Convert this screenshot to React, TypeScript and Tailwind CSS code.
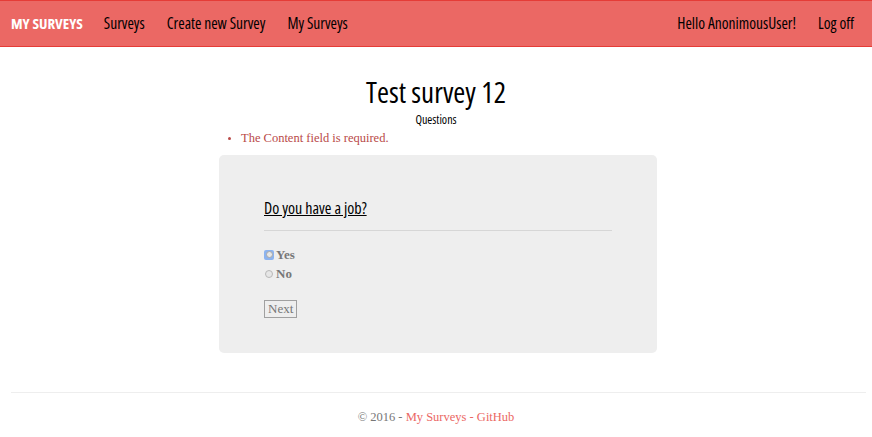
import React from "react";

const head = { fontFamily: '"Open Sans", "Roboto", sans-serif', fontStretch: "condensed" as const };
const serif = { fontFamily: '"Liberation Serif", Georgia, serif' };

export default function App() {
  return (
    <div className="w-[872px] h-[437px] bg-white overflow-hidden">
      <nav className="h-[47px] bg-[#eb6864] border-y border-[#e53c37] flex items-center justify-between text-[15.5px] text-black" style={head}>
        <div className="flex items-center">
          <span className="pl-[11px] pr-[21px] text-white font-bold text-[15px]">MY SURVEYS</span>
          <span className="pr-[22px]">Surveys</span>
          <span className="pr-[22px]">Create new Survey</span>
          <span>My Surveys</span>
        </div>
        <div className="flex items-center pr-[18px]">
          <span className="pr-[22px]">Hello AnonimousUser!</span>
          <span>Log off</span>
        </div>
      </nav>
      <div className="flex flex-col items-center pt-[29px]" style={head}>
        <h1 className="text-[29px] leading-[32px] text-black">Test survey 12</h1>
        <div className="text-[12px] leading-[16px] mt-[4px] text-black">Questions</div>
      </div>
      <div className="ml-[219px] w-[438px]">
        <ul className="list-disc pl-[22px] mt-[2px] text-[12.5px] leading-[17px] text-[#b94a48] marker:text-[10px]" style={serif}>
          <li>The Content field is required.</li>
        </ul>
        <div className="mt-[8px] h-[198px] bg-[#eeeeee] rounded-[5px] pl-[45px] pr-[45px] pt-[44px]">
          <div className="text-[16px] leading-[18px] underline text-black" style={head}>Do you have a job?</div>
          <div className="mt-[13px] h-px bg-[#d6d6d6]" />
          <div className="mt-[17px] flex flex-col gap-[6px] text-[13px] font-bold text-[#777777]" style={serif}>
            <label className="flex items-center gap-[2px] h-[13px]">
              <span className="w-[10px] h-[10px] rounded-[2px] bg-[#8cb3ef] flex items-center justify-center">
                <span className="w-[7px] h-[7px] rounded-full bg-[#e6e6e6] border border-[#a8a8a8]" />
              </span>
              <span>Yes</span>
            </label>
            <label className="flex items-center gap-[2px] h-[13px]">
              <span className="w-[10px] h-[10px] flex items-center justify-center">
                <span className="w-[8px] h-[8px] rounded-full bg-[#e6e6e6] border border-[#b8b8b8]" />
              </span>
              <span>No</span>
            </label>
          </div>
          <div className="mt-[15px]">
            <span className="inline-block border border-[#a0a0a0] bg-[#eeeeee] text-[#777777] text-[13px] leading-[15px] px-[3px] pb-[1px]" style={serif}>Next</span>
          </div>
        </div>
      </div>
      <div className="ml-[11px] mr-[6px] mt-[39px] h-px bg-[#eeeeee]" />
      <div className="text-center mt-[15px] text-[12.5px] text-[#777777]" style={serif}>
        © 2016 - <span className="text-[#eb6864]">My Surveys - GitHub</span>
      </div>
    </div>
  );
}
